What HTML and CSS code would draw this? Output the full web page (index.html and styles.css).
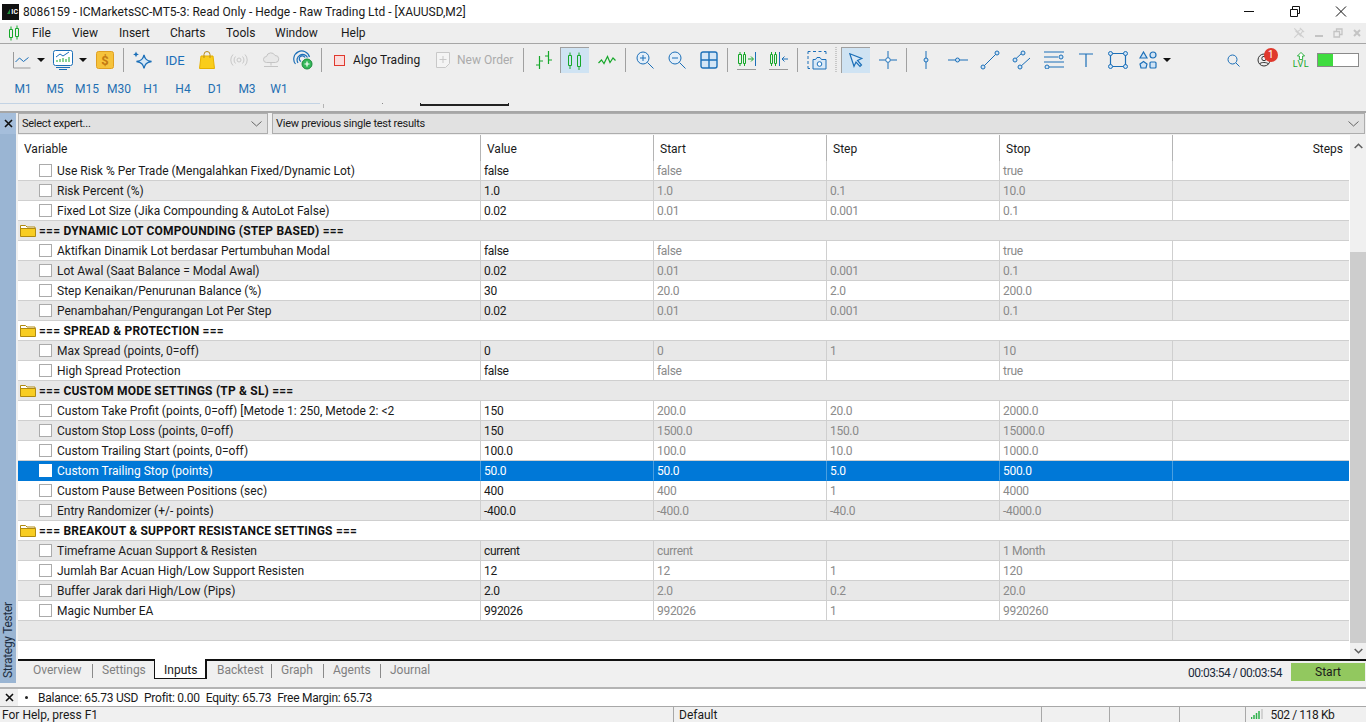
FILE: index.html
```html
<!DOCTYPE html>
<html lang="en">
<head>
    <meta charset="UTF-8">
    <title>8086159 - ICMarketsSC-MT5-3</title>
    <link rel="stylesheet" href="styles.css">
</head>
<body>

    <!-- Title bar -->
    <header class="titlebar">
        <span class="app-logo"><i class="logo-mark"></i>IC</span>
        <span class="title-text">8086159 - ICMarketsSC-MT5-3: Read Only - Hedge - Raw Trading Ltd - [XAUUSD,M2]</span>
        <div class="win-buttons">
            <svg width="46" height="22" viewBox="0 0 46 22"><path d="M18 10.5h10" stroke="#111" fill="none"/></svg>
            <svg width="46" height="22" viewBox="0 0 46 22"><path d="M18.5 8.5h7v7h-7zM20.5 8V5.5h7v7H26" stroke="#111" fill="none"/></svg>
            <svg width="46" height="22" viewBox="0 0 46 22"><path d="M18 5.5l10 10M28 5.5l-10 10" stroke="#111" fill="none"/></svg>
        </div>
    </header>

    <!-- Menu -->
    <nav class="menubar">
        <svg class="menu-logo" width="12" height="16" viewBox="0 0 12 16"><path d="M1.500 4.500h3v8h-3zM3 1.500v3M3 12.500v3M7.500 3.500h3v8h-3zM9 .5v3M9 11.500v3" stroke="#16a82a" fill="none"/></svg>
        <span class="menu-item m-file">File</span>
        <span class="menu-item m-view">View</span>
        <span class="menu-item m-insert">Insert</span>
        <span class="menu-item m-charts">Charts</span>
        <span class="menu-item m-tools">Tools</span>
        <span class="menu-item m-window">Window</span>
        <span class="menu-item m-help">Help</span>
        <div class="mdi-buttons">
            <svg width="12" height="12" viewBox="0 0 14 14"><path d="M8 1l5 5M9.500 2.500L6 5 3.500 5l5.500 5.500V8L11.500 4.500M6 8l-4.500 4.500M1.500 1.500l11 11" stroke="#cfcfcf" stroke-width="1.300" fill="none"/></svg>
            <svg width="10" height="10" viewBox="0 0 10 10"><path d="M1 8h8" stroke="#c4c4c4" stroke-width="2" fill="none"/></svg>
            <svg width="10" height="10" viewBox="0 0 10 10"><path d="M1 3.500h5.500V9H1zM3.500 3V1H9v5.500H7" stroke="#c4c4c4" stroke-width="1.300" fill="none"/></svg>
            <svg width="10" height="10" viewBox="0 0 10 10"><path d="M2 2l6 6M8 2l-6 6" stroke="#c4c4c4" stroke-width="2" fill="none"/></svg>
        </div>
    </nav>

    <!-- Toolbars -->
    <section class="toolbars">
        <div class="toolbar">
            <button class="tool tool-drop">
                <svg width="18" height="18" viewBox="0 0 18 18"><path d="M.5 1v16h17" stroke="#9a9a9a" fill="none"/><path d="M2.500 11l4-4 4 3.500 5-4" stroke="#1b6fb8" fill="none"/></svg>
                <i class="caret"></i>
            </button>
            <button class="tool tool-drop tool-wide">
                <svg width="20" height="20" viewBox="0 0 20 20"><rect x=".5" y=".5" width="19" height="15" rx="2" fill="#fff" stroke="#1b6fb8"/><path d="M3 7l4-3 3 2 6-4" stroke="#1b6fb8" fill="none"/><path d="M4 12v-2M7 12V9M10 12V8M13 12V9M16 12V7" stroke="#16a82a" fill="none"/><path d="M3 17.500h14M6 19.500h8" stroke="#1b6fb8" fill="none"/></svg>
                <i class="caret"></i>
            </button>
            <button class="tool">
                <svg width="18" height="18" viewBox="0 0 18 18"><rect x=".5" y=".5" width="17" height="17" rx="2" fill="#f6c33c" stroke="#e0a022"/><text x="9" y="13.500" text-anchor="middle" class="dollar">$</text></svg>
            </button>
            <span class="sep"></span>
            <button class="tool">
                <svg width="20" height="20" viewBox="0 0 20 20"><path d="M11 5c.8 4 2.500 5.500 7.500 6.500-5 1-6.700 2.500-7.500 7-.8-4.500-2.500-6-7.500-7 5-1 6.700-2.500 7.500-6.500z" fill="#d6e8f7" stroke="#1b6fb8" stroke-width="1.300"/><path d="M3 1.500l.9 2 2 .9-2 .9-.9 2-.9-2-2-.9 2-.9z" fill="#1b6fb8"/></svg>
            </button>
            <button class="tool"><span class="ide">IDE</span></button>
            <button class="tool">
                <svg width="16" height="18" viewBox="0 0 16 18"><path d="M2 5h12l1.500 12.500H.5z" fill="#f9cd1b" stroke="#e5b000"/><path d="M5 7V3.500a3 3 0 0 1 6 0V7" stroke="#b98d1a" fill="none"/></svg>
            </button>
            <button class="tool">
                <svg width="18" height="14" viewBox="0 0 18 14"><circle cx="9" cy="7" r="2" stroke="#c8c8c8" fill="none"/><path d="M5.500 3.500a5 5 0 0 0 0 7M12.500 3.500a5 5 0 0 1 0 7M3 1.500a8 8 0 0 0 0 11M15 1.500a8 8 0 0 1 0 11" stroke="#c8c8c8" fill="none"/></svg>
            </button>
            <button class="tool">
                <svg width="18" height="16" viewBox="0 0 18 16"><path d="M4.500 10.500a3 3 0 0 1 0-6 4.500 4.500 0 0 1 8.500-1 3.500 3.500 0 0 1 .5 7z" fill="#e8e8e8" stroke="#c4c4c4"/><path d="M9 10.500v3M2 14.500h14" stroke="#c4c4c4" fill="none"/></svg>
            </button>
            <button class="tool">
                <svg width="20" height="20" viewBox="0 0 20 20"><path d="M2.500 14a8 8 0 1 1 14-7M5 13a5.500 5.500 0 1 1 9.500-5.500M8 11.500a3 3 0 1 1 4-4" stroke="#1b6fb8" stroke-width="1.200" fill="none"/><circle cx="14" cy="14" r="5" fill="#35b85a" stroke="#1a8a3a"/><path d="M14 11.500v5M11.500 14h5" stroke="#fff" stroke-width="1.200"/></svg>
            </button>
            <span class="sep"></span>
            <button class="tool tool-text algo"><i class="algo-box"></i>Algo Trading</button>
            <button class="tool tool-text order">
                <svg width="14" height="18" viewBox="0 0 14 18"><path d="M.5 1.500h13v11l-4 4h-9z" fill="#f4f4f4" stroke="#c8c8c8"/><path d="M7 5v7M3.500 8.500h7" stroke="#c8c8c8"/></svg>
                New Order
            </button>
            <span class="sep"></span>
            <button class="tool tool-bars">
                <svg width="18" height="18" viewBox="0 0 18 18"><path d="M4.500 5v13M1 14h3.500M13.500 0v13M13.500 5H10M13.500 9H17M4.500 10H8" stroke="#16a82a" stroke-width="1.200" fill="none"/></svg>
            </button>
            <button class="tool tool-on tool-candle">
                <svg width="14" height="18" viewBox="0 0 14 18"><path d="M.5 3.500h3v10h-3zM2 .5v3M2 13.500v3.500M9.500 3.500h3v11h-3zM11 .5v3M11 14.500V18" stroke="#16a82a" fill="none"/></svg>
            </button>
            <button class="tool">
                <svg width="18" height="10" viewBox="0 0 18 10"><path d="M.5 8l3-3 2.500 3.500L9.500 1.500l2.500 6 3-4.500 2.500 2.500" stroke="#16a82a" stroke-width="1.200" fill="none"/></svg>
            </button>
            <span class="sep"></span>
            <button class="tool">
                <svg width="18" height="18" viewBox="0 0 18 18"><circle cx="7" cy="7" r="6" fill="#e4eff9" stroke="#1b6fb8"/><path d="M11.500 11.500l6 6M4 7h6M7 4v6" stroke="#1b6fb8" fill="none"/></svg>
            </button>
            <button class="tool">
                <svg width="18" height="18" viewBox="0 0 18 18"><circle cx="7" cy="7" r="6" fill="#e4eff9" stroke="#1b6fb8"/><path d="M11.500 11.500l6 6M4 7h6" stroke="#1b6fb8" fill="none"/></svg>
            </button>
            <button class="tool">
                <svg width="18" height="18" viewBox="0 0 18 18"><rect x="1" y="1" width="16" height="16" rx="2" fill="#d4e6f6" stroke="#1b6fb8" stroke-width="1.400"/><path d="M9 1v16M1 9h16" stroke="#1b6fb8" stroke-width="1.400"/></svg>
            </button>
            <span class="sep"></span>
            <button class="tool">
                <svg width="20" height="19" viewBox="0 0 20 19"><path d="M1.500 3.500h3v9h-3zM3 1v2.500M3 12.500V15M6.500 3.500h2v9h-2zM7.500 1v2.500M7.500 12.500V15" stroke="#16a82a" fill="none"/><path d="M11 8h5M14 5.500L16.500 8 14 10.500" stroke="#16a82a" fill="none"/><path d="M18.500 1v14" stroke="#1b6fb8" fill="none"/><path d="M0 18.500h19" stroke="#9a9a9a"/></svg>
            </button>
            <button class="tool">
                <svg width="20" height="19" viewBox="0 0 20 19"><path d="M1.500 3.500h2v9h-2zM2.500 1v2.500M2.500 12.500V15M5.500 3.500h2v9h-2zM6.500 1v2.500M6.500 12.500V15" stroke="#16a82a" fill="none"/><path d="M10.500 1v14" stroke="#1b6fb8" fill="none"/><path d="M13 8h6M15.500 5.500L13 8l2.500 2.500" stroke="#1b6fb8" fill="none"/><path d="M0 18.500h19" stroke="#9a9a9a"/></svg>
            </button>
            <span class="sep"></span>
            <button class="tool">
                <svg width="20" height="20" viewBox="0 0 20 20"><path d="M1 4V1.500h2.500M6 1.500h3M11.500 1.500h3M17 1.500h2V4M1 6v3M1 11v3M1 16v2.500h2" stroke="#1b6fb8" fill="none"/><path d="M6 9.500h2.500l1.500-2h3l1.500 2H19v9.500H6z" fill="#d9e9f7" stroke="#1b6fb8"/><circle cx="12.500" cy="14" r="2.300" fill="#fff" stroke="#1b6fb8"/></svg>
            </button>
            <span class="grip"></span>
            <button class="tool tool-on tool-cursor">
                <svg width="14" height="15" viewBox="0 0 14 15"><path d="M.8.800l12 4.700-4.300 2 4 4.500-1.500 1.500-4-4.500-2 4.300z" fill="#d9e9f7" stroke="#1b6fb8" stroke-width="1.200"/></svg>
            </button>
            <button class="tool">
                <svg width="18" height="18" viewBox="0 0 18 18"><path d="M9 0v6.500M9 11.500V18M0 9h6.500M11.500 9H18" stroke="#1b6fb8" fill="none"/><circle cx="9" cy="9" r="2.300" fill="#fff" stroke="#1b6fb8"/></svg>
            </button>
            <span class="sep"></span>
            <button class="tool">
                <svg width="6" height="18" viewBox="0 0 6 18"><path d="M3 0v18" stroke="#1b6fb8"/><circle cx="3" cy="9" r="2" fill="#cfe3f5" stroke="#1b6fb8"/></svg>
            </button>
            <button class="tool">
                <svg width="20" height="6" viewBox="0 0 20 6"><path d="M0 3h20" stroke="#1b6fb8"/><circle cx="9.500" cy="3" r="2" fill="#cfe3f5" stroke="#1b6fb8"/></svg>
            </button>
            <button class="tool">
                <svg width="20" height="20" viewBox="0 0 20 20"><path d="M3 17L17 3" stroke="#1b6fb8"/><circle cx="3" cy="17" r="2" fill="#cfe3f5" stroke="#1b6fb8"/><circle cx="17" cy="3" r="2" fill="#cfe3f5" stroke="#1b6fb8"/></svg>
            </button>
            <button class="tool">
                <svg width="20" height="20" viewBox="0 0 20 20"><path d="M2.500 10L10 3M8 17l10-9" stroke="#1b6fb8"/><circle cx="3" cy="10" r="2" fill="#cfe3f5" stroke="#1b6fb8"/><circle cx="11" cy="3" r="2" fill="#cfe3f5" stroke="#1b6fb8"/><circle cx="8" cy="17" r="2" fill="#cfe3f5" stroke="#1b6fb8"/></svg>
            </button>
            <button class="tool">
                <svg width="20" height="18" viewBox="0 0 20 18"><path d="M0 1h20M0 6h14M0 11h20M5 16h15" stroke="#1b6fb8" fill="none"/><circle cx="17" cy="6" r="2" fill="#cfe3f5" stroke="#1b6fb8"/><circle cx="3" cy="16" r="2" fill="#cfe3f5" stroke="#1b6fb8"/></svg>
            </button>
            <button class="tool">
                <svg width="14" height="14" viewBox="0 0 14 14"><path d="M0 1h14M7 1v13" stroke="#1b6fb8" stroke-width="1.200"/></svg>
            </button>
            <button class="tool">
                <svg width="20" height="18" viewBox="0 0 20 18"><path d="M3 2.500h14M3 15.500h14M2.500 3v12M17.500 3v12" stroke="#1b6fb8" stroke-width="1.200"/><g fill="#cfe3f5" stroke="#1b6fb8"><circle cx="2.500" cy="2.500" r="2"/><circle cx="17.500" cy="2.500" r="2"/><circle cx="2.500" cy="15.500" r="2"/><circle cx="17.500" cy="15.500" r="2"/></g></svg>
            </button>
            <button class="tool tool-drop">
                <svg width="18" height="18" viewBox="0 0 18 18"><g fill="#cfe3f5" stroke="#1b6fb8" stroke-width="1.200"><path d="M4.500 1l3.500 6H1z"/><circle cx="14" cy="4" r="3"/><path d="M4.500 10.500l3.500 2.500-1 4H2L1 13z"/><rect x="11" y="11" width="6" height="6" rx="1"/></g></svg>
                <i class="caret"></i>
            </button>

            <div class="toolbar-right">
                <svg class="tr-search" width="13" height="13" viewBox="0 0 13 13"><circle cx="5.500" cy="5.500" r="4.500" stroke="#1b6fb8" fill="none"/><path d="M9 9l3.500 3.500" stroke="#1b6fb8" fill="none"/></svg>
                <div class="account">
                    <svg width="14" height="14" viewBox="0 0 14 14"><circle cx="7" cy="7" r="6" stroke="#333" fill="none"/><circle cx="7" cy="5.500" r="2.200" stroke="#333" fill="none"/><path d="M2.500 11c1-2 7.500-2 9 0" stroke="#333" fill="none"/></svg>
                    <span class="badge">1</span>
                </div>
                <div class="lvl">
                    <svg width="10" height="8" viewBox="0 0 10 9"><path d="M5 .5L9 4.500H6.800V8.500H3.200V4.500H1z" fill="#fff" stroke="#16a82a"/></svg>
                    <span>LVL</span>
                </div>
                <div class="battery"><span class="battery-fill"></span></div>
            </div>
        </div>

        <div class="toolbar timeframes">
            <button class="tf">M1</button>
            <button class="tf">M5</button>
            <button class="tf">M15</button>
            <button class="tf">M30</button>
            <button class="tf">H1</button>
            <button class="tf">H4</button>
            <button class="tf">D1</button>
            <button class="tf">M3</button>
            <button class="tf">W1</button>
        </div>

        <div class="chart-edge">
            <span class="edge-line"></span>
            <span class="edge-tick"></span>
            <span class="edge-dot"></span>
            <span class="edge-bracket"></span>
        </div>
    </section>

    <!-- Strategy tester panel -->
    <main class="tester">
        <aside class="side-strip">
            <span class="close-box">
                <svg width="9" height="9" viewBox="0 0 9 9"><path d="M1 1l7 7M8 1L1 8" stroke="#111" stroke-width="1.600"/></svg>
            </span>
            <span class="side-label">Strategy Tester</span>
        </aside>

        <div class="tester-body">
            <div class="combos">
                <div class="combo combo-expert">Select expert...<svg width="11" height="6" viewBox="0 0 11 6"><path d="M.5.500l5 4.500 5-4.500" stroke="#666" fill="none"/></svg></div>
                <div class="combo combo-results">View previous single test results<svg width="11" height="6" viewBox="0 0 11 6"><path d="M.5.500l5 4.500 5-4.500" stroke="#666" fill="none"/></svg></div>
            </div>

            <div class="grid-wrap">
                <div class="grid-scroll">
                    <table class="inputs">
                        <colgroup>
                            <col class="col-var"><col class="col-num"><col class="col-num"><col class="col-num"><col class="col-num"><col class="col-steps">
                        </colgroup>
                        <thead>
                            <tr>
                                <th class="h-var">Variable</th>
                                <th>Value</th>
                                <th>Start</th>
                                <th>Step</th>
                                <th>Stop</th>
                                <th class="h-steps">Steps</th>
                            </tr>
                        </thead>
                        <tbody>
                            <tr><td class="var"><i class="check"></i>Use Risk % Per Trade (Mengalahkan Fixed/Dynamic Lot)</td><td class="val">false</td><td>false</td><td></td><td>true</td><td></td></tr>
                            <tr><td class="var"><i class="check"></i>Risk Percent (%)</td><td class="val">1.0</td><td>1.0</td><td>0.1</td><td>10.0</td><td></td></tr>
                            <tr><td class="var"><i class="check"></i>Fixed Lot Size (Jika Compounding &amp; AutoLot False)</td><td class="val">0.02</td><td>0.01</td><td>0.001</td><td>0.1</td><td></td></tr>
                            <tr class="group"><td colspan="6"><svg class="folder" width="16" height="13" viewBox="0 0 16 13"><path d="M.5 3V1.500h5l1.500 1.500h8V5H.5z" fill="#fff" stroke="#b08a10"/><path d="M.5 4.500h15v8H.5z" fill="#f8cd22" stroke="#b08a10"/></svg>=== DYNAMIC LOT COMPOUNDING (STEP BASED) ===</td></tr>
                            <tr><td class="var"><i class="check"></i>Aktifkan Dinamik Lot berdasar Pertumbuhan Modal</td><td class="val">false</td><td>false</td><td></td><td>true</td><td></td></tr>
                            <tr><td class="var"><i class="check"></i>Lot Awal (Saat Balance = Modal Awal)</td><td class="val">0.02</td><td>0.01</td><td>0.001</td><td>0.1</td><td></td></tr>
                            <tr><td class="var"><i class="check"></i>Step Kenaikan/Penurunan Balance (%)</td><td class="val">30</td><td>20.0</td><td>2.0</td><td>200.0</td><td></td></tr>
                            <tr><td class="var"><i class="check"></i>Penambahan/Pengurangan Lot Per Step</td><td class="val">0.02</td><td>0.01</td><td>0.001</td><td>0.1</td><td></td></tr>
                            <tr class="group"><td colspan="6"><svg class="folder" width="16" height="13" viewBox="0 0 16 13"><path d="M.5 3V1.500h5l1.500 1.500h8V5H.5z" fill="#fff" stroke="#b08a10"/><path d="M.5 4.500h15v8H.5z" fill="#f8cd22" stroke="#b08a10"/></svg>=== SPREAD &amp; PROTECTION ===</td></tr>
                            <tr><td class="var"><i class="check"></i>Max Spread (points, 0=off)</td><td class="val">0</td><td>0</td><td>1</td><td>10</td><td></td></tr>
                            <tr><td class="var"><i class="check"></i>High Spread Protection</td><td class="val">false</td><td>false</td><td></td><td>true</td><td></td></tr>
                            <tr class="group"><td colspan="6"><svg class="folder" width="16" height="13" viewBox="0 0 16 13"><path d="M.5 3V1.500h5l1.500 1.500h8V5H.5z" fill="#fff" stroke="#b08a10"/><path d="M.5 4.500h15v8H.5z" fill="#f8cd22" stroke="#b08a10"/></svg>=== CUSTOM MODE SETTINGS (TP &amp; SL) ===</td></tr>
                            <tr><td class="var"><i class="check"></i>Custom Take Profit (points, 0=off) [Metode 1: 250, Metode 2: &lt;2</td><td class="val">150</td><td>200.0</td><td>20.0</td><td>2000.0</td><td></td></tr>
                            <tr><td class="var"><i class="check"></i>Custom Stop Loss (points, 0=off)</td><td class="val">150</td><td>1500.0</td><td>150.0</td><td>15000.0</td><td></td></tr>
                            <tr><td class="var"><i class="check"></i>Custom Trailing Start (points, 0=off)</td><td class="val">100.0</td><td>100.0</td><td>10.0</td><td>1000.0</td><td></td></tr>
                            <tr class="selected"><td class="var"><i class="check"></i>Custom Trailing Stop (points)</td><td class="val">50.0</td><td>50.0</td><td>5.0</td><td>500.0</td><td></td></tr>
                            <tr><td class="var"><i class="check"></i>Custom Pause Between Positions (sec)</td><td class="val">400</td><td>400</td><td>1</td><td>4000</td><td></td></tr>
                            <tr><td class="var"><i class="check"></i>Entry Randomizer (+/- points)</td><td class="val">-400.0</td><td>-400.0</td><td>-40.0</td><td>-4000.0</td><td></td></tr>
                            <tr class="group"><td colspan="6"><svg class="folder" width="16" height="13" viewBox="0 0 16 13"><path d="M.5 3V1.500h5l1.500 1.500h8V5H.5z" fill="#fff" stroke="#b08a10"/><path d="M.5 4.500h15v8H.5z" fill="#f8cd22" stroke="#b08a10"/></svg>=== BREAKOUT &amp; SUPPORT RESISTANCE SETTINGS ===</td></tr>
                            <tr><td class="var"><i class="check"></i>Timeframe Acuan Support &amp; Resisten</td><td class="val">current</td><td>current</td><td></td><td>1 Month</td><td></td></tr>
                            <tr><td class="var"><i class="check"></i>Jumlah Bar Acuan High/Low Support Resisten</td><td class="val">12</td><td>12</td><td>1</td><td>120</td><td></td></tr>
                            <tr><td class="var"><i class="check"></i>Buffer Jarak dari High/Low (Pips)</td><td class="val">2.0</td><td>2.0</td><td>0.2</td><td>20.0</td><td></td></tr>
                            <tr><td class="var"><i class="check"></i>Magic Number EA</td><td class="val">992026</td><td>992026</td><td>1</td><td>9920260</td><td></td></tr>
                            <tr class="empty"><td colspan="5"></td><td></td></tr>
                        </tbody>
                    </table>
                </div>
                <div class="scrollbar">
                    <svg class="arrow-up" width="9" height="6" viewBox="0 0 9 6"><path d="M.7 5L4.500 1.300 8.300 5" stroke="#606060" stroke-width="1.600" fill="none"/></svg>
                    <span class="thumb"></span>
                    <svg class="arrow-down" width="9" height="6" viewBox="0 0 9 6"><path d="M.7 1l3.800 3.700L8.300 1" stroke="#606060" stroke-width="1.600" fill="none"/></svg>
                </div>
            </div>

            <div class="tabbar">
                <span class="tab t-overview">Overview</span>
                <span class="tab tab-sep t-settings">Settings</span>
                <span class="tab tab-active">Inputs</span>
                <span class="tab t-backtest">Backtest</span>
                <span class="tab tab-sep t-graph">Graph</span>
                <span class="tab tab-sep t-agents">Agents</span>
                <span class="tab tab-sep">Journal</span>
                <span class="timer">00:03:54 / 00:03:54</span>
                <button class="start">Start</button>
            </div>
        </div>
    </main>

    <!-- Account line -->
    <div class="account-line">
        <span class="close-box small">
            <svg width="9" height="9" viewBox="0 0 9 9"><path d="M1 1l7 7M8 1L1 8" stroke="#111" stroke-width="1.600"/></svg>
        </span>
        <div class="account-text">
            <i class="bullet"></i>
            <span>Balance: 65.73 USD</span>
            <span>Profit: 0.00</span>
            <span>Equity: 65.73</span>
            <span>Free Margin: 65.73</span>
        </div>
    </div>

    <!-- Status bar -->
    <footer class="statusbar">
        <span class="st st-help">For Help, press F1</span>
        <span class="st st-profile">Default</span>
        <span class="st st-a"></span>
        <span class="st st-b"></span>
        <span class="st st-c"></span>
        <span class="st st-net">
            <svg width="12" height="10" viewBox="0 0 12 10"><path d="M.5 10V8M3 10V6M5.500 10V4M8 10V2" stroke="#2bb14a" stroke-width="1.500"/><path d="M11 10V0" stroke="#c8c8c8" stroke-width="1.500"/></svg>
            502 / 118 Kb
        </span>
    </footer>

</body>
</html>
```

FILE: styles.css
```css
* {
    box-sizing: border-box;
}

html, body {
    margin: 0;
    height: 722px;
    overflow: hidden;
}

body {
    display: flex;
    flex-direction: column;
    font-family: Roboto, "Noto Sans", sans-serif;
    font-size: 12px;
    color: #1a1a1a;
    background: #f0f0f0;
}

button {
    font: inherit;
    color: inherit;
    background: none;
    border: none;
    padding: 0;
}

/* Title bar */
.titlebar {
    height: 23px;
    flex: none;
    display: flex;
    align-items: center;
    background: white;
    padding-left: 2px;
}

.app-logo {
    width: 17px;
    height: 16px;
    background: #111;
    color: white;
    font-size: 7px;
    font-weight: bold;
    line-height: 16px;
    text-align: right;
    padding-right: 1px;
    display: flex;
    align-items: center;
    justify-content: flex-end;
    gap: 1px;
}

.logo-mark {
    width: 0;
    height: 0;
    border-left: 3px solid transparent;
    border-bottom: 5px solid #1f8f3a;
}

.title-text {
    margin-left: 4px;
    padding-top: 1px;
}

.win-buttons {
    margin-left: auto;
    display: flex;
    padding-right: 2px;
}

/* Menu */
.menubar {
    height: 20px;
    flex: none;
    display: flex;
    align-items: center;
    background: #eeeeee;
    padding-left: 8px;
}

.menu-logo {
    margin-right: 12px;
}

.menu-item {
    line-height: 21px;
}

.m-file { width: 40px; }
.m-view { width: 47px; }
.m-insert { width: 51px; }
.m-charts { width: 56px; }
.m-tools { width: 49px; }
.m-window { width: 66px; }

.mdi-buttons {
    margin-left: auto;
    display: flex;
    align-items: center;
    gap: 9px;
    padding-right: 4px;
}

/* Toolbars */
.toolbars {
    flex: none;
    height: 70px;
    background: #eeeeee;
    border-top: 1px solid #a6a6a6;
    border-bottom: 2px solid #a6a6a6;
    display: flex;
    flex-direction: column;
}

.toolbar {
    height: 32px;
    flex: none;
    display: flex;
    align-items: center;
    padding-left: 8px;
}

.tool {
    width: 32px;
    height: 26px;
    flex: none;
    display: flex;
    align-items: center;
    justify-content: center;
}

.tool-drop {
    width: 40px;
    gap: 6px;
    justify-content: flex-start;
    padding-left: 5px;
}

.tool-wide {
    width: 41px;
}

.caret {
    width: 0;
    height: 0;
    border-left: 4px solid transparent;
    border-right: 4px solid transparent;
    border-top: 4px solid #111;
}

.sep {
    width: 1px;
    height: 24px;
    flex: none;
    background: #a0a0a0;
    margin: 0 3px 0 2px;
}

.grip {
    width: 2px;
    height: 26px;
    flex: none;
    margin: 0 4px 0 2px;
    background-image: linear-gradient(#c8c8c8 50%, transparent 50%);
    background-size: 2px 2px;
}

.tool-on {
    width: 29px;
    background: #cfe3f3;
    border-left: 1px solid #a0a0a0;
    border-top: 1px solid #a0a0a0;
}

.tool-bars {
    margin-left: 1px;
}

.tool-candle,
.tool-cursor {
    margin-right: 2px;
}

.dollar {
    font-size: 13px;
    font-weight: bold;
    fill: #c47a12;
}

.ide {
    color: #1b6fb8;
    font-size: 13px;
}

.tool-text {
    justify-content: flex-start;
}

.algo {
    width: 103px;
    padding-left: 9px;
    gap: 8px;
}

.algo-box {
    width: 11px;
    height: 11px;
    background: #fbdcdc;
    border: 1px solid #e0392d;
}

.order {
    width: 93px;
    padding-left: 8px;
    gap: 7px;
    color: #ababab;
}

.toolbar-right {
    margin-left: auto;
    display: flex;
    align-items: center;
    padding-right: 7px;
}

.tr-search {
    margin-right: 17px;
}

.account {
    position: relative;
    display: flex;
    margin-right: 22px;
}

.badge {
    position: absolute;
    left: 7px;
    top: -5px;
    width: 14px;
    height: 14px;
    border-radius: 50%;
    background: #e0392d;
    color: white;
    font-size: 10px;
    line-height: 14px;
    text-align: center;
}

.lvl {
    display: flex;
    flex-direction: column;
    align-items: center;
    margin-right: 8px;
    color: #16a82a;
    font-size: 9px;
    line-height: 8px;
    letter-spacing: .5px;
}

.battery {
    width: 42px;
    height: 14px;
    background: white;
    border: 1px solid #8a8a8a;
}

.battery-fill {
    display: block;
    width: 15px;
    height: 100%;
    background: #3fdc3f;
}

.timeframes {
    height: 27px;
    padding-left: 7px;
    margin-top: -1px;
}

.tf {
    width: 32px;
    color: #1f6fb2;
    text-align: center;
}

.chart-edge {
    display: flex;
    height: 5px;
    flex: none;
    margin-top: 1px;
}

.edge-line {
    width: 320px;
    height: 1px;
    background: #c3d3e4;
}

.edge-tick {
    width: 1px;
    height: 4px;
    background: #b4b4b4;
    margin-left: 3px;
    margin-top: 1px;
}

.edge-dot {
    width: 1px;
    height: 1px;
    background: #8a8a8a;
    margin-left: 58px;
}

.edge-bracket {
    width: 89px;
    height: 3px;
    margin-left: 37px;
    border: 1px solid #222;
    border-top: none;
    border-bottom-width: 2px;
}

/* Tester panel */
.tester {
    flex: 1;
    min-height: 0;
    display: flex;
    border-bottom: 2px solid #b4b4b4;
}

.side-strip {
    width: 18px;
    flex: none;
    display: flex;
    flex-direction: column;
    padding-bottom: 4px;
}

.close-box {
    width: 16px;
    height: 21px;
    flex: none;
    background: #a5bedb;
    display: flex;
    align-items: center;
    justify-content: center;
}

.close-box.small {
    background: none;
    width: 18px;
}

.side-label {
    width: 16px;
    flex: 1;
    background: #9ab5d3;
    color: #1e2f42;
    writing-mode: vertical-rl;
    transform: rotate(180deg);
    line-height: 16px;
    padding-top: 5px;
    letter-spacing: -.3px;
}

.tester-body {
    flex: 1;
    min-width: 0;
    display: flex;
    flex-direction: column;
}

.combos {
    height: 22px;
    flex: none;
    display: flex;
    gap: 4px;
    background: #f0f0f0;
    padding-right: 1px;
}

.combo {
    height: 21px;
    display: flex;
    align-items: center;
    justify-content: space-between;
    background: #e1e1e1;
    border: 1px solid #adadad;
    padding: 0 5px 0 3px;
    font-size: 11px;
    letter-spacing: -.25px;
}

.combo-expert {
    width: 250px;
}

.combo-results {
    flex: 1;
}

.grid-wrap {
    flex: 1;
    min-height: 0;
    display: flex;
    border-bottom: 2px solid #111;
    background: white;
}

.grid-scroll {
    flex: 1;
    min-width: 0;
}

/* Inputs table */
.inputs {
    table-layout: fixed;
    border-collapse: separate;
    border-spacing: 0;
    width: 1331px;
}

.col-var { width: 463px; }
.col-num { width: 173px; }
.col-steps { width: 176px; }

.inputs th {
    height: 26px;
    padding: 2px 0 0 6px;
    font-weight: normal;
    text-align: left;
    border-right: 1px solid #b4b4b4;
}

.inputs th.h-steps {
    text-align: right;
    padding-right: 6px;
    border-right: none;
}

.inputs td {
    height: 20px;
    padding: 2px 0 0 3px;
    line-height: 17px;
    color: #8a8a8a;
    letter-spacing: -.3px;
    border-right: 1px solid #cfcfcf;
    border-bottom: 1px solid #cfcfcf;
    white-space: nowrap;
    overflow: hidden;
}

.inputs td:last-child {
    border-right: none;
}

.inputs tbody tr:nth-child(even) {
    background: #e8e8e8;
}

.inputs td.var {
    color: #1a1a1a;
    padding-left: 21px;
    letter-spacing: 0;
}

.inputs td.val {
    color: #1a1a1a;
}

.check {
    display: inline-block;
    width: 13px;
    height: 13px;
    margin-right: 5px;
    vertical-align: -2px;
    background: white;
    border: 1px solid #ababab;
}

.inputs tr.group td {
    color: #111;
    font-weight: bold;
    padding-left: 2px;
    letter-spacing: .2px;
    border-right: none;
}

.folder {
    margin-right: 3px;
    vertical-align: -2px;
}

.inputs tbody tr.selected {
    background: #0078d7;
}

.inputs tr.selected td {
    color: white;
    border-right-color: #4a9fe0;
    border-bottom-color: #0078d7;
}

.inputs tr.selected .check {
    border-color: white;
}

/* Scrollbar */
.scrollbar {
    width: 16px;
    flex: none;
    background: #f0f0f0;
    display: flex;
    flex-direction: column;
    align-items: center;
    padding-top: 8px;
}

.thumb {
    width: 100%;
    height: 391px;
    flex: none;
    background: #cdcdcd;
    margin-top: 103px;
}

.arrow-down {
    margin-top: 5px;
}

/* Tabs */
.tabbar {
    height: 26px;
    flex: none;
    display: flex;
    align-items: flex-start;
    background: #f0f0f0;
    padding-left: 5px;
    color: #808080;
}

.tab {
    height: 19px;
    line-height: 18px;
    padding: 0 0 0 10px;
    position: relative;
}

.t-overview { width: 69px; }
.t-settings { width: 62px; }
.t-backtest { width: 64px; }
.t-graph { width: 52px; }
.t-agents { width: 57px; }

.tab-sep::before {
    content: "";
    position: absolute;
    left: 0;
    top: 3px;
    height: 14px;
    width: 1px;
    background: #8a8a8a;
}

.tab-active {
    width: 53px;
    height: 20px;
    margin-top: -2px;
    padding: 2px 0 0 9px;
    background: white;
    color: #1a1a1a;
    border: 1px solid #111;
    border-top: none;
    border-right-width: 2px;
}

.timer {
    margin-left: auto;
    color: #1a2a3a;
    margin-right: 9px;
    margin-top: 3px;
    line-height: 18px;
    letter-spacing: -.5px;
}

.start {
    width: 74px;
    height: 18px;
    margin: 2px 1px 0 0;
    background: #92c85f;
    color: #1a1a1a;
}

/* Account line */
.account-line {
    height: 18px;
    flex: none;
    display: flex;
    align-items: center;
    background: #f0f0f0;
    border-bottom: 1px solid #a8a8a8;
}

.account-text {
    flex: 1;
    height: 17px;
    background: white;
    display: flex;
    align-items: center;
    gap: 6px;
    padding-left: 7px;
    letter-spacing: -.25px;
}

.bullet {
    width: 3px;
    height: 3px;
    border-radius: 50%;
    background: #222;
    margin-right: 4px;
}

/* Status bar */
.statusbar {
    height: 15px;
    flex: none;
    display: flex;
    background: #f0f0f0;
    line-height: 17px;
    overflow: hidden;
}

.st {
    flex: none;
    height: 15px;
    padding-left: 5px;
    border-left: 1px solid #a8a8a8;
}

.st-help {
    width: 673px;
    border-left: none;
    padding-left: 2px;
}

.st-profile { width: 368px; }
.st-a { width: 68px; }
.st-b { width: 70px; }
.st-c { width: 66px; }

.st-net {
    flex: 1;
    white-space: nowrap;
    letter-spacing: -.4px;
}

.st-net svg {
    margin-right: 5px;
}
```
